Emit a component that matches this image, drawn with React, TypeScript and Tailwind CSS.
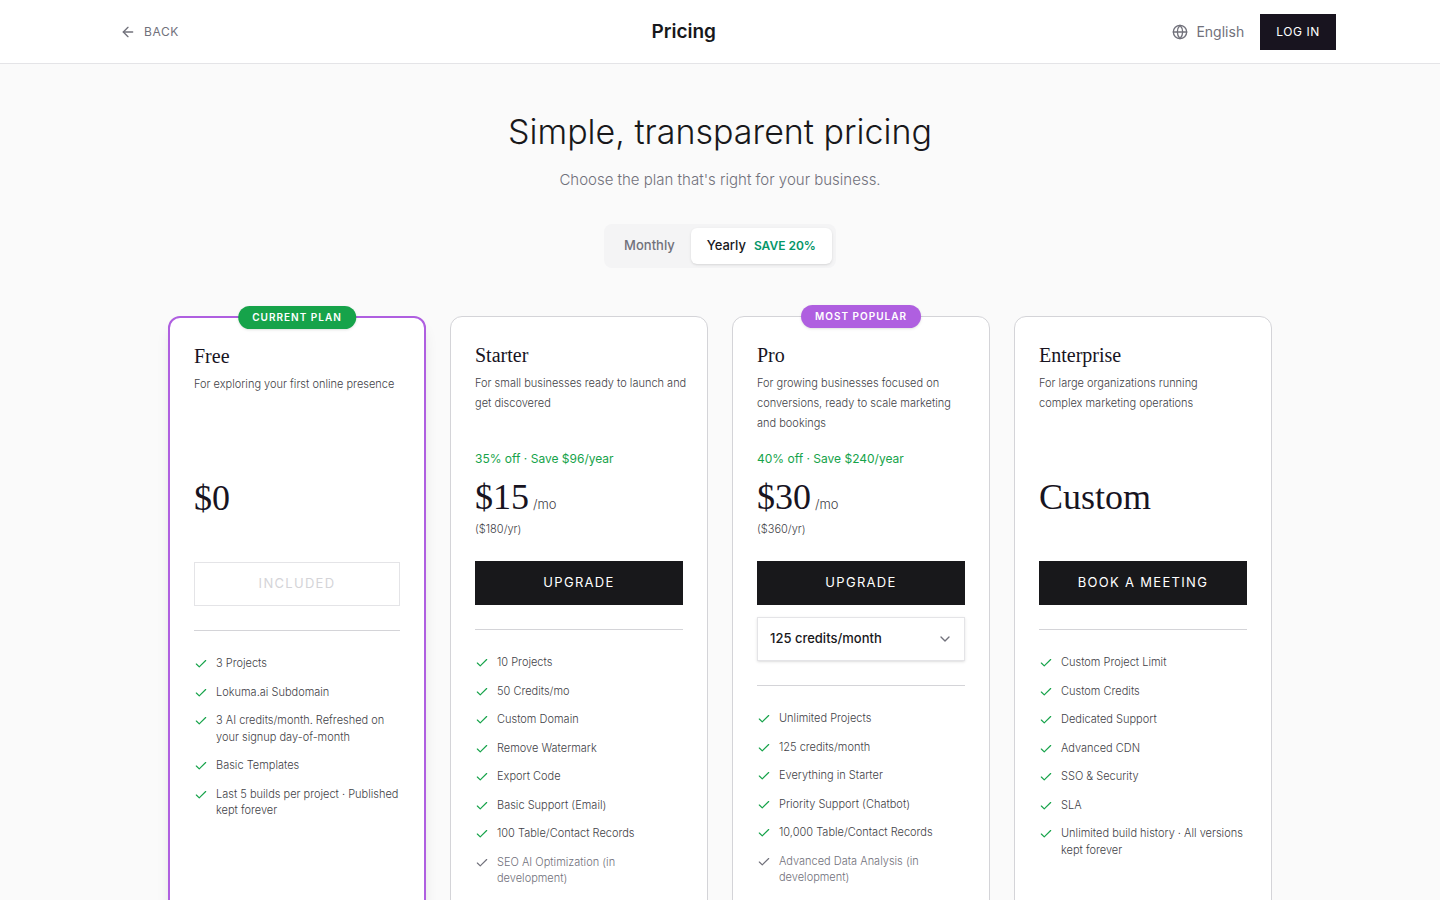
import { useState } from 'react';
import { ArrowLeft, Check, ChevronDown, Globe } from 'lucide-react';
import clsx from 'clsx';

type Billing = 'monthly' | 'yearly';

type Feature = { label: string; upcoming?: boolean };

type Plan = {
  id: string;
  name: string;
  description: string;
  price: string;
  perMonth?: boolean;
  saving?: string;
  yearlyTotal?: string;
  action: string;
  current?: boolean;
  popular?: boolean;
  creditOptions?: string[];
  features: Feature[];
};

const plans: Plan[] = [
  {
    id: 'free',
    name: 'Free',
    description: 'For exploring your first online presence',
    price: '$0',
    action: 'Included',
    current: true,
    features: [
      { label: '3 Projects' },
      { label: 'Lokuma.ai Subdomain' },
      { label: '3 AI credits/month. Refreshed on your signup day-of-month' },
      { label: 'Basic Templates' },
      { label: 'Last 5 builds per project · Published kept forever' },
    ],
  },
  {
    id: 'starter',
    name: 'Starter',
    description: 'For small businesses ready to launch and get discovered',
    price: '$15',
    perMonth: true,
    saving: '35% off · Save $96/year',
    yearlyTotal: '($180/yr)',
    action: 'Upgrade',
    features: [
      { label: '10 Projects' },
      { label: '50 Credits/mo' },
      { label: 'Custom Domain' },
      { label: 'Remove Watermark' },
      { label: 'Export Code' },
      { label: 'Basic Support (Email)' },
      { label: '100 Table/Contact Records' },
      { label: 'SEO AI Optimization (in development)', upcoming: true },
    ],
  },
  {
    id: 'pro',
    name: 'Pro',
    description:
      'For growing businesses focused on conversions, ready to scale marketing and bookings',
    price: '$30',
    perMonth: true,
    saving: '40% off · Save $240/year',
    yearlyTotal: '($360/yr)',
    action: 'Upgrade',
    popular: true,
    creditOptions: ['125 credits/month'],
    features: [
      { label: 'Unlimited Projects' },
      { label: '125 credits/month' },
      { label: 'Everything in Starter' },
      { label: 'Priority Support (Chatbot)' },
      { label: '10,000 Table/Contact Records' },
      { label: 'Advanced Data Analysis (in development)', upcoming: true },
    ],
  },
  {
    id: 'enterprise',
    name: 'Enterprise',
    description: 'For large organizations running\ncomplex marketing operations',
    price: 'Custom',
    action: 'Book a meeting',
    features: [
      { label: 'Custom Project Limit' },
      { label: 'Custom Credits' },
      { label: 'Dedicated Support' },
      { label: 'Advanced CDN' },
      { label: 'SSO & Security' },
      { label: 'SLA' },
      { label: 'Unlimited build history · All versions kept forever' },
    ],
  },
];

function Header() {
  return (
    <header className="border-b border-zinc-200 bg-white">
      <div className="mx-auto flex h-[63px] max-w-[1280px] items-center justify-between px-6">
        <button
          type="button"
          className="flex h-9 items-center gap-2 px-4 text-xs tracking-wider text-zinc-500 uppercase"
        >
          <ArrowLeft size={16} />
          Back
        </button>
        <p className="text-[19px] leading-7 font-semibold text-[#18181b]">Pricing</p>
        <div className="flex items-center gap-4">
          <button
            type="button"
            className="flex items-center gap-2 text-sm text-zinc-500"
          >
            <Globe size={16} />
            English
          </button>
          <button
            type="button"
            className="h-9 bg-[#18141f] px-4 text-xs tracking-wider text-white uppercase"
          >
            Log in
          </button>
        </div>
      </div>
    </header>
  );
}

function BillingToggle() {
  const [billing, setBilling] = useState<Billing>('yearly');
  const tab = (active: boolean) =>
    clsx(
      'flex h-9 items-center gap-2 rounded-md px-4 text-[13px] font-medium',
      active ? 'bg-white text-[#18181b] shadow-sm' : 'text-zinc-500',
    );
  return (
    <div className="flex rounded-lg bg-zinc-100 p-1">
      <button
        type="button"
        aria-pressed={billing === 'monthly'}
        onClick={() => setBilling('monthly')}
        className={tab(billing === 'monthly')}
      >
        Monthly
      </button>
      <button
        type="button"
        aria-pressed={billing === 'yearly'}
        onClick={() => setBilling('yearly')}
        className={tab(billing === 'yearly')}
      >
        Yearly
        <span className="text-xs font-semibold text-[#059669]">SAVE 20%</span>
      </button>
    </div>
  );
}

function Badge({ label, className }: { label: string; className: string }) {
  return (
    <span
      className={clsx(
        'absolute -top-3 left-1/2 -translate-x-1/2 rounded-full px-3.5 py-1 text-[10px] leading-[15px] font-semibold tracking-widest whitespace-nowrap text-white uppercase shadow-sm',
        className,
      )}
    >
      {label}
    </span>
  );
}

function PlanCard({ plan }: { plan: Plan }) {
  return (
    <article
      className={clsx(
        'relative rounded-xl bg-white p-6 pb-8',
        plan.current
          ? 'border-2 border-[#af5fe0] shadow-lg'
          : 'border border-zinc-300',
      )}
    >
      {plan.current && <Badge label="Current plan" className="bg-[#16a34a]" />}
      {plan.popular && <Badge label="Most popular" className="bg-[#af5fe0]" />}

      <h2 className="font-['Liberation_Serif',serif] text-xl leading-7 text-[#18141f]">
        {plan.name}
      </h2>
      <p className="mt-1 -mr-1 min-h-[60px] text-[11px] leading-5 font-light whitespace-pre-line text-zinc-700">
        {plan.description}
      </p>

      <div className="mt-4 min-h-[92px]">
        <p className="h-5 text-xs leading-5 text-[#16a34a]">{plan.saving}</p>
        <p className="mt-0.5 flex h-12 items-baseline gap-1">
          <span className="font-['Liberation_Serif',serif] text-4xl leading-[52px] text-[#18141f]">
            {plan.price}
          </span>
          {plan.perMonth && (
            <span className="text-[13px] leading-5 font-light text-zinc-700">/mo</span>
          )}
        </p>
        {plan.yearlyTotal && (
          <p className="text-[11px] leading-5 font-light text-zinc-700">{plan.yearlyTotal}</p>
        )}
      </div>

      <button
        type="button"
        disabled={plan.current}
        className={clsx(
          'mt-5 h-11 w-full text-[13px] tracking-widest uppercase',
          plan.current
            ? 'border border-zinc-200 bg-white text-zinc-300'
            : 'bg-[#18181b] text-white',
        )}
      >
        {plan.action}
      </button>

      {plan.creditOptions && (
        <div className="relative mt-3">
          <select
            aria-label="Credits per month"
            className="h-11 w-full appearance-none border border-zinc-200 bg-white px-3 text-[13px] font-medium text-[#18181b] shadow-sm"
          >
            {plan.creditOptions.map((option) => (
              <option key={option}>{option}</option>
            ))}
          </select>
          <ChevronDown
            size={16}
            className="pointer-events-none absolute top-3.5 right-3 text-zinc-500"
          />
        </div>
      )}

      <ul className="mt-6 flex flex-col gap-3 border-t border-zinc-300 pt-6">
        {plan.features.map((feature) => (
          <li
            key={feature.label}
            className={clsx(
              'flex items-start gap-2 text-[11px] leading-normal font-light',
              feature.upcoming ? 'text-zinc-500' : 'text-zinc-700',
            )}
          >
            <Check
              size={14}
              className={clsx(
                'mt-0.5 shrink-0',
                feature.upcoming ? 'text-zinc-500' : 'text-[#16a34a]',
              )}
            />
            <span>{feature.label}</span>
          </li>
        ))}
      </ul>
    </article>
  );
}

export default function App() {
  return (
    <div className="min-h-screen bg-[#fafafa] font-['Inter',sans-serif]">
      <Header />
      <main className="mx-auto flex max-w-[1152px] flex-col items-center px-6 py-12">
        <h1 className="text-center text-[34px] leading-10 font-light text-[#18181b]">
          Simple, transparent pricing
        </h1>
        <p className="mt-4 mb-8 text-center text-[15px] leading-6 font-light text-zinc-500">
          Choose the plan that's right for your business.
        </p>
        <BillingToggle />
        <section
          aria-label="Plans"
          className="mt-12 grid w-full grid-cols-1 gap-6 sm:grid-cols-2 lg:grid-cols-4"
        >
          {plans.map((plan) => (
            <PlanCard key={plan.id} plan={plan} />
          ))}
        </section>
      </main>
    </div>
  );
}
